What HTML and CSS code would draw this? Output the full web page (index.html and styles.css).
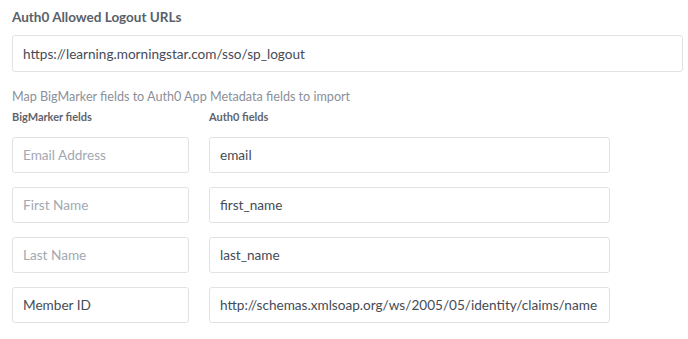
FILE: index.html
```html
<!DOCTYPE html>
<html lang="en">
<head>
  <meta charset="UTF-8">
  <title>Auth0 settings</title>
  <link rel="stylesheet" href="styles.css">
</head>
<body>
  <div class="panel">
    <!-- Logout URLs -->
    <label class="section-title" for="logoutUrls">Auth0 Allowed Logout URLs</label>
    <input id="logoutUrls" class="field field-wide" type="text" value="https://learning.morningstar.com/sso/sp_logout">

    <p class="hint">Map BigMarker fields to Auth0 App Metadata fields to import</p>

    <!-- Field mapping -->
    <div class="map-grid">
      <div class="col-head">BigMarker fields</div>
      <div class="col-head">Auth0 fields</div>

      <input class="field" type="text" placeholder="Email Address">
      <input class="field" type="text" value="email">

      <input class="field" type="text" placeholder="First Name">
      <input class="field" type="text" value="first_name">

      <input class="field" type="text" placeholder="Last Name">
      <input class="field" type="text" value="last_name">

      <input class="field" type="text" value="Member ID">
      <input class="field" type="text" value="http://schemas.xmlsoap.org/ws/2005/05/identity/claims/name">
    </div>
  </div>
</body>
</html>
```

FILE: styles.css
```css
body {
  margin: 0;
  background: #fff;
  font-family: Lato, "Open Sans", sans-serif;
  color: #454b57;
}

.panel {
  padding: 9px 5px 0 12px;
  display: flex;
  flex-direction: column;
}

.section-title {
  font-size: 13.5px;
  font-weight: 700;
  color: #5a5f69;
  line-height: 16px;
  margin-bottom: 10px;
}

.field {
  box-sizing: border-box;
  height: 36px;
  padding: 0 6px 0 10px;
  border: 1px solid #e2e2e2;
  border-radius: 3px;
  font-family: inherit;
  font-size: 13.6px;
  color: #454b57;
  background: #fff;
  outline: none;
}
.field::placeholder { color: #a3a8b2; }

.field-wide {
  width: 671px;
  height: 37px;
}

.hint {
  margin: 17px 0 0;
  font-size: 12.6px;
  color: #8b9099;
  line-height: 16px;
}

/* Mapping grid */
.map-grid {
  display: grid;
  grid-template-columns: 177px 401px;
  column-gap: 20px;
  row-gap: 14px;
  margin-top: 5px;
}
.map-grid .col-head {
  font-size: 11px;
  font-weight: 700;
  color: #5f646d;
  line-height: 14px;
  margin-bottom: -1px;
}
```
